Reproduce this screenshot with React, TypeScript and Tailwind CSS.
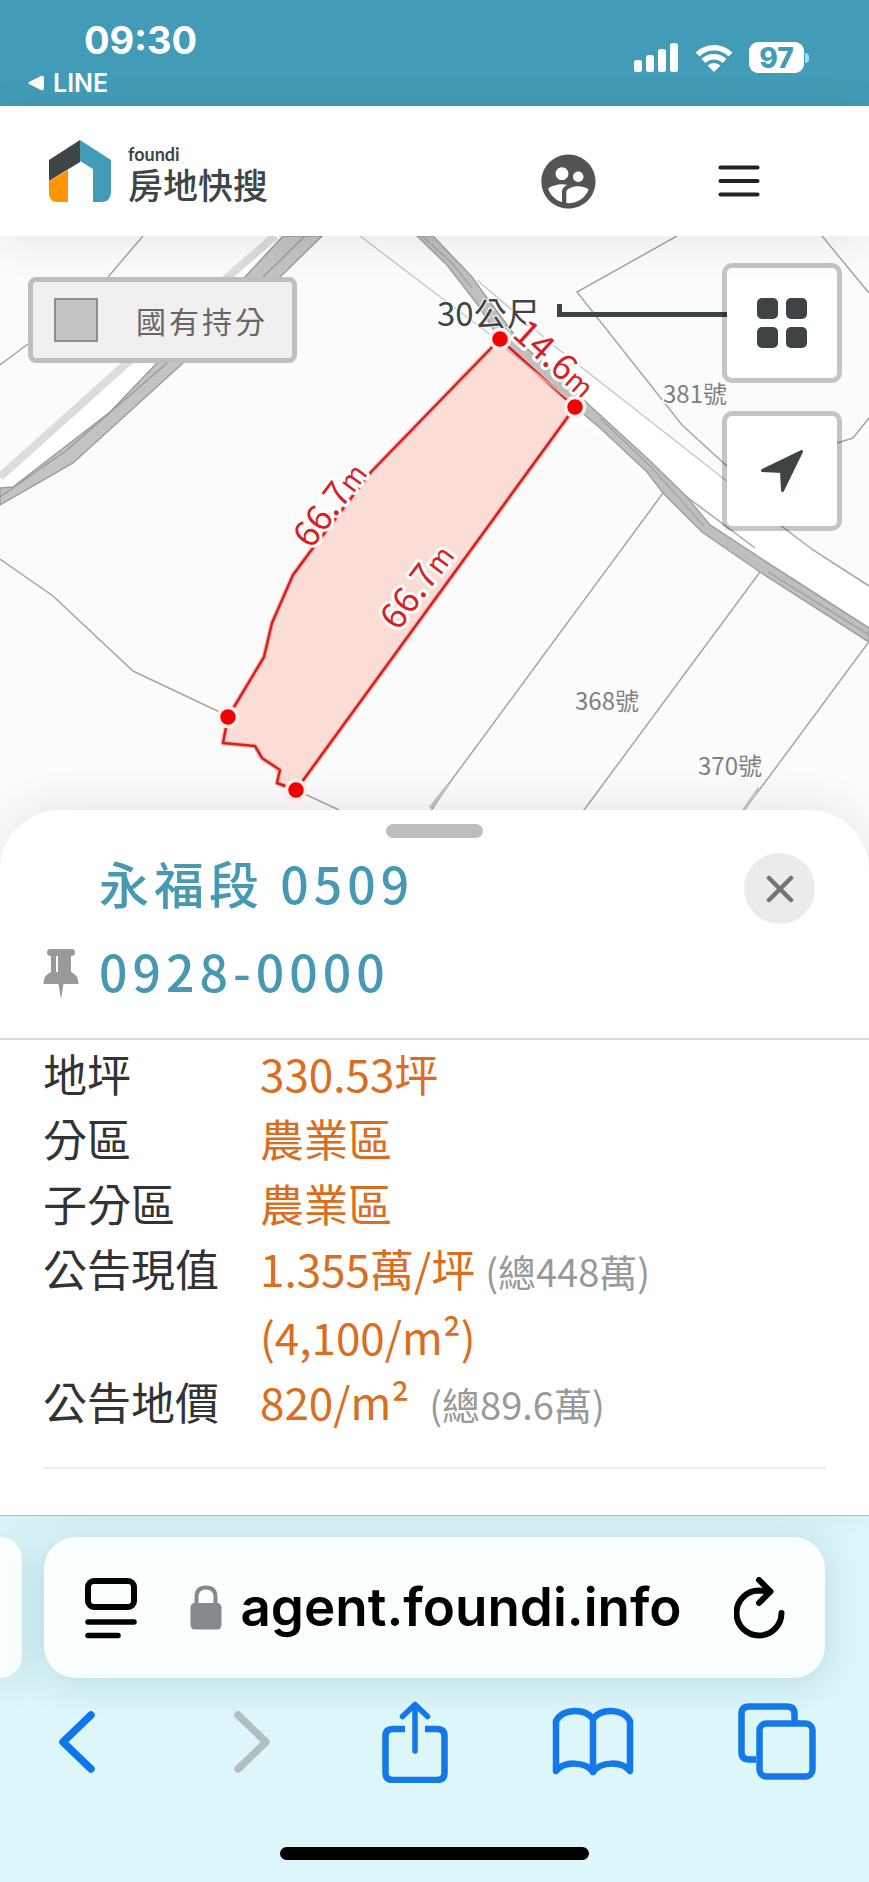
import { MdSupervisedUserCircle } from "react-icons/md";

const parcelPath =
  "M500 339 L371 472 L310 552 L293 575 L272 623 L264 657 L228 717 L223 743 L255 746 L262 758 L280 770 L277 783 L296 790 L575 407 Z";

const vertices = [
  [500, 339],
  [575, 407],
  [228, 717],
  [296, 790],
];

const edgeLabels = [
  { value: "66.7", x: 311, y: 550, angle: -53 },
  { value: "66.7", x: 398, y: 632, angle: -53 },
  { value: "14.6", x: 511, y: 336, angle: 42 },
];

const houseNumbers = [
  { text: "381號", x: 663, y: 403 },
  { text: "368號", x: 575, y: 710 },
  { text: "370號", x: 698, y: 775 },
];

function StatusBar() {
  return (
    <div className="flex h-[106px] items-start justify-between bg-[#439cb7] pr-[60px] pl-7 font-['Inter',sans-serif] text-white">
      <div className="pt-5">
        <div className="pl-[56px] text-[38px] leading-10 font-bold">09:30</div>
        <a href="#line" className="mt-[11px] flex items-center gap-[9px] text-[25px] leading-6 font-semibold">
          <svg width="16" height="16" viewBox="0 0 16 16" fill="currentColor" aria-hidden="true">
            <path d="M1 7 Q0 8 1 9 L13 15 Q16 16 16 13 V3 Q16 0 13 1 Z" />
          </svg>
          LINE
        </a>
      </div>
      <div className="mt-[42px] flex items-center gap-4">
        <svg width="45" height="30" viewBox="0 0 45 30" fill="currentColor" role="img" aria-label="訊號">
          <rect x="0" y="17" width="8" height="12" rx="2.5" />
          <rect x="12" y="12" width="8" height="17" rx="2.5" />
          <rect x="24" y="6" width="8" height="23" rx="2.5" />
          <rect x="36" y="0" width="8" height="29" rx="2.5" />
        </svg>
        <svg width="38" height="30" viewBox="0 0 38 30" fill="none" stroke="currentColor" role="img" aria-label="Wi-Fi">
          <path d="M2.500 11.500 A23.500 23.500 0 0 1 35.500 11.500" strokeWidth="5.500" />
          <path d="M8.500 18 A15 15 0 0 1 29.500 18" strokeWidth="5.500" />
          <path d="M19 29 L12.500 22.500 A9.500 9.500 0 0 1 25.500 22.500 Z" fill="currentColor" stroke="none" />
        </svg>
        <div className="flex items-center gap-px">
          <div className="flex h-[31px] w-[55px] items-center justify-center rounded-[9px] bg-white text-[28px] leading-none font-extrabold text-[#439cb7]">
            97
          </div>
          <div className="h-[10px] w-1 rounded-r-full bg-[#9be0ee]" />
        </div>
      </div>
    </div>
  );
}

function SiteHeader() {
  return (
    <header className="relative z-10 flex h-[130px] items-center justify-between bg-white pr-[109px] pl-12 shadow-[0_6px_40px_rgba(0,0,0,0.08)]">
      <a href="#home" className="flex items-center gap-4">
        <svg width="64" height="63" viewBox="0 0 64 63" aria-hidden="true">
          <path d="M1 20 L32 0 V22 L1 41 Z" fill="#3e4547" />
          <path d="M1 41 L20 30 V62 H9 Q1 62 1 53 Z" fill="#ff9405" />
          <path d="M32 0 L63 20 V52 Q63 62 53 62 H45 V29 L32 21 Z" fill="#439cb7" />
        </svg>
        <span className="flex flex-col pt-[6px] text-[#3e4547]">
          <span className="font-['Lato',sans-serif] text-lg leading-5 font-bold">foundi</span>
          <span className="text-[35px] leading-10 font-medium">房地快搜</span>
        </span>
      </a>
      <div className="mt-5 flex items-center gap-[117px]">
        <button type="button" aria-label="會員">
          <MdSupervisedUserCircle size={65} color="#545454" />
        </button>
        <button type="button" aria-label="選單">
          <svg width="42" height="34" viewBox="0 0 42 34" stroke="#242424" strokeWidth="4.200" strokeLinecap="round">
            <path d="M2.500 3.500 H39.500 M2.500 17 H39.500 M2.500 30.500 H39.500" />
          </svg>
        </button>
      </div>
    </header>
  );
}

function ParcelMap() {
  return (
    <svg
      viewBox="0 236 869 638"
      preserveAspectRatio="xMidYMid slice"
      className="block h-[638px] w-full bg-[#fbfbfb]"
      role="img"
      aria-label="地籍圖"
    >
      <path d="M283 236 L245 277 L157 363 L110 412 L13 487 L0 488 V477 L127 363 L228 277 L275 236 Z" fill="#fff" />
      <path d="M433 236 L477 280 L553 345 L728 482 L780 525 L813 550 L869 586 V642 L702 532 L500 340 Z" fill="#fff" />
      <path d="M275 236 L228 277 L127 363 L0 477" fill="none" stroke="#dcdcdc" strokeWidth="8" />
      <path
        d="M283 236 L245 277 L157 363 L110 412 L13 487 L0 488 V505 L73 463 L183 363 L280 277 L322 236 Z"
        fill="#c3c3c3"
        stroke="#9c9c9c"
        strokeWidth="1.5"
      />
      <path d="M305 236 L263 277 L167 363 L67 450 L0 497" fill="none" stroke="#9c9c9c" strokeWidth="1.5" />
      <path
        d="M417 236 L447 265 L478 305 L500 340 L575 407 L600 428 L647 472 L663 493 L702 532 L728 550 L760 572 L869 642 V628 L768 563 L710 525 L687 497 L647 458 L587 403 L520 342 L487 298 L472 277 L433 236 Z"
        fill="#bfbfbf"
        stroke="#a0a0a0"
        strokeWidth="1.5"
      />
      <g fill="none" stroke="#a6a6a6" strokeWidth="1.500">
        <path d="M143 236 L108 277 M28 344 L0 365" />
        <path d="M422 236 L452 263 L472 288 M600 418 L652 468 L704 526" />
        <path d="M768 572 L869 635" />
        <path d="M677 236 L577 292 L682 425 L728 467 L780 525 L813 550 L869 586" />
        <path d="M822 236 L869 293 M869 418 L853 438 L837 443" />
        <path d="M687 497 L755 548" />
        <path d="M663 493 L448 785 L425 820" />
        <path d="M760 572 L584 810 L560 842" />
        <path d="M868 643 L763 785 L742 812" />
        <path d="M448 785 L430 808 M759 788 L744 810" strokeWidth="3" stroke="#c4c4c4" />
        <path d="M0 559 L53 596 L133 671 L228 716 M296 790 L339 810" />
      </g>
      <path d="M360 236 L435 293 L500 342 M477 280 L553 345 L728 482" fill="none" stroke="#c8c8c8" strokeWidth="1.500" />
      <path d={parcelPath} fill="#f9ddd6" stroke="#fbb9b0" strokeWidth="5" strokeLinejoin="round" />
      <path d={parcelPath} fill="none" stroke="#d02222" strokeWidth="2.500" strokeLinejoin="round" />
      <path d="M504 347 L567 398" stroke="#cfb4ae" strokeWidth="1.500" />
      <g fill="#808080" fontSize="24" stroke="#fbfbfb" strokeWidth="3" paintOrder="stroke">
        {houseNumbers.map((n) => (
          <text key={n.text} x={n.x} y={n.y}>
            {n.text}
          </text>
        ))}
      </g>
      <text x="437" y="326" fontSize="33" fill="#3e4547" stroke="#fff" strokeWidth="2" paintOrder="stroke">
        30公尺
      </text>
      <path d="M559.500 304 V314.500 H740" fill="none" stroke="#3e4547" strokeWidth="5" />
      <g fill="#d81f26" stroke="#fff" strokeWidth="6" strokeLinejoin="round" paintOrder="stroke">
        {edgeLabels.map((l) => (
          <text key={l.x} transform={`translate(${l.x} ${l.y}) rotate(${l.angle})`} fontSize="36">
            {l.value}
            <tspan fontSize="28">m</tspan>
          </text>
        ))}
      </g>
      {vertices.map(([cx, cy]) => (
        <circle key={cx} cx={cx} cy={cy} r="9.500" fill="#f50000" stroke="#fff0ed" strokeWidth="3.500" />
      ))}
    </svg>
  );
}

function MapArea() {
  return (
    <section className="relative">
      <ParcelMap />
      <div className="absolute top-[41px] left-7 flex h-[86px] items-center gap-[38px] rounded-lg border-[5px] border-[#bebebe] bg-[#f0f0f0] pr-6 pl-[21px]">
        <span className="size-11 border-2 border-[#8c8c8c] bg-[#c3c3c3]" />
        <span className="text-[30px] tracking-widest text-[#666]">國有持分</span>
      </div>
      <div className="absolute top-[27px] right-[27px] flex flex-col gap-7">
        <button
          type="button"
          aria-label="圖層"
          className="flex size-[120px] items-center justify-center rounded-[10px] border-[5px] border-black/22 bg-white bg-clip-padding"
        >
          <svg width="50" height="50" viewBox="0 0 50 50" fill="#3e4345">
            <rect x="0" y="0" width="21" height="21" rx="5" />
            <rect x="29" y="0" width="21" height="21" rx="5" />
            <rect x="0" y="29" width="21" height="21" rx="5" />
            <rect x="29" y="29" width="21" height="21" rx="5" />
          </svg>
        </button>
        <button
          type="button"
          aria-label="定位"
          className="flex size-[120px] items-center justify-center rounded-[10px] border-[5px] border-black/22 bg-white bg-clip-padding"
        >
          <svg width="44" height="44" viewBox="0 0 44 44" fill="#3e4345" stroke="#3e4345" strokeWidth="3" strokeLinejoin="round">
            <path d="M41.500 2.500 L2.500 21.500 L21.500 22.500 L22.500 41.500 Z" />
          </svg>
        </button>
      </div>
    </section>
  );
}

const rows = [
  { label: "地坪", value: "330.53坪" },
  { label: "分區", value: "農業區" },
  { label: "子分區", value: "農業區" },
  { label: "公告現值", value: "1.355萬/坪", total: "(總448萬)", extra: "(4,100/m²)" },
  { label: "公告地價", value: "820/m²\u00a0", total: "(總89.6萬)" },
];

function DetailSheet() {
  return (
    <section className="relative z-10 -mt-16 rounded-t-[60px] bg-white pt-[14px] shadow-[0_-6px_40px_rgba(0,0,0,0.08)]">
      <div className="mx-auto h-[14px] w-[97px] rounded-full bg-[#bebebe]" />
      <div className="flex items-start justify-between border-b-2 border-[#dcdcdc] pr-[54px] pb-6 pl-[43px]">
        <div className="flex items-end gap-5">
          <svg width="36" height="50" viewBox="0 0 36 50" fill="#999" className="mb-[15px]" aria-hidden="true">
            <path d="M7 0 H29 Q32 0 32 3.500 Q32 7 28 7 V23 Q35.500 26 35.500 35 H20.500 L18 50 L15.500 35 H0.500 Q0.500 26 8 23 V7 Q4 7 4 3.500 Q4 0 7 0 Z" />
            <path d="M14 7 V23" stroke="#fff" strokeWidth="2" />
          </svg>
          <h1 className="text-[50px] leading-[88px] font-medium tracking-widest text-[#4799b1]">
            永福段 0509
            <br />
            0928-0000
          </h1>
        </div>
        <button
          type="button"
          aria-label="關閉"
          className="mt-[15px] flex size-[71px] items-center justify-center rounded-full bg-[#ebebeb]"
        >
          <svg width="28" height="28" viewBox="0 0 28 28" stroke="#757575" strokeWidth="4.500" strokeLinecap="round">
            <path d="M3 3 L25 25 M25 3 L3 25" />
          </svg>
        </button>
      </div>
      <div className="px-[43px] pb-[46px]">
        <dl className="border-b-2 border-[#ededed] pt-px pb-[33px] text-[44px] leading-[65px]">
          {rows.map((row) => (
            <div key={row.label} className="flex">
              <dt className="w-[217px] text-[#333]">{row.label}</dt>
              <dd className="text-[#db6d20]">
                {row.value}
                {row.total && <span className="ml-[10px] text-[38px] leading-none text-[#999]">{row.total}</span>}
                {row.extra && <div className="mt-[3px]">{row.extra}</div>}
              </dd>
            </div>
          ))}
        </dl>
      </div>
    </section>
  );
}

function BrowserBar() {
  return (
    <footer className="overflow-hidden border-t border-[#a9c5ca] bg-[#dcf6fa] pt-[21px] pb-[22px]">
      <div className="flex gap-[22px] pr-11">
        <div className="w-[22px] rounded-r-[32px] bg-[#fbfeff] shadow-[0_4px_36px_rgba(60,120,130,0.22)]" />
        <div className="flex h-[141px] flex-1 items-center justify-between rounded-[32px] bg-[#fbfeff] px-10 shadow-[0_4px_36px_rgba(60,120,130,0.22)]">
          <button type="button" aria-label="頁面選單">
            <svg width="54" height="62" viewBox="0 0 54 62" fill="none" stroke="#000" strokeLinecap="round">
              <rect x="4" y="4" width="46" height="26" rx="6" strokeWidth="6" />
              <path d="M4 45 H50 M4 58.500 H34" strokeWidth="5.500" />
            </svg>
          </button>
          <button type="button" className="flex items-center gap-[18px] font-['Inter',sans-serif] text-[53px] leading-none font-semibold text-black">
            <svg width="32" height="45" viewBox="0 0 32 45" aria-hidden="true">
              <path d="M6.500 22 V12 Q6.500 2.500 16 2.500 Q25.500 2.500 25.500 12 V22" fill="none" stroke="#85898c" strokeWidth="4" />
              <rect x="0.500" y="18" width="31" height="26.500" rx="4.500" fill="#85898c" />
            </svg>
            agent.foundi.info
          </button>
          <button type="button" aria-label="重新載入">
            <svg width="51" height="62" viewBox="0 0 51 62" fill="none" stroke="#000" strokeWidth="6" strokeLinecap="round" strokeLinejoin="round">
              <path d="M47.500 36 A22.500 22.500 0 1 1 25 13.500 L36 14.500" />
              <path d="M25 3 L36.500 14.500 L25 26" />
            </svg>
          </button>
        </div>
      </div>
      <nav className="mt-[22px] flex h-[84px] items-center justify-between pr-[53px] pl-[59px]">
        <button type="button" aria-label="上一頁" className="w-[70px]">
          <svg width="37" height="64" viewBox="0 0 37 64" fill="none" stroke="#0b76ee" strokeWidth="7.500" strokeLinecap="round" strokeLinejoin="round">
            <path d="M32 5 L4 32 L32 59" />
          </svg>
        </button>
        <button type="button" aria-label="下一頁" className="w-[44px]">
          <svg width="37" height="64" viewBox="0 0 37 64" fill="none" stroke="#b0bfc2" strokeWidth="7.500" strokeLinecap="round" strokeLinejoin="round">
            <path d="M5 5 L33 32 L5 59" />
          </svg>
        </button>
        <button type="button" aria-label="分享">
          <svg width="66" height="82" viewBox="0 0 66 82" fill="none" stroke="#1478e8" strokeWidth="6.500" strokeLinejoin="round">
            <path d="M23 28 H11 Q3.500 28 3.500 35 V72 Q3.500 79 11 79 H55 Q62.500 79 62.500 72 V35 Q62.500 28 55 28 H43" />
            <path d="M33 50 V4 M20.500 15.500 L33 3.500 L45.500 15.500" strokeWidth="5.500" strokeLinecap="round" />
          </svg>
        </button>
        <button type="button" aria-label="書籤">
          <svg width="82" height="70" viewBox="0 0 82 70" fill="none" stroke="#1478e8" strokeWidth="6.500" strokeLinejoin="round" strokeLinecap="round">
            <path d="M41 12 C33 1 11 1 4 14 V64 C12 54 33 54 41 65 C49 54 70 54 78 64 V14 C71 1 49 1 41 12 V65" />
          </svg>
        </button>
        <button type="button" aria-label="分頁">
          <svg width="78" height="78" viewBox="0 0 78 78" fill="none" stroke="#1478e8" strokeWidth="6.500">
            <path d="M18 56.500 H11 Q3.500 56.500 3.500 49 V11 Q3.500 3.500 11 3.500 H49 Q56.500 3.500 56.500 11 V18" />
            <rect x="21.500" y="20.500" width="53" height="53" rx="7" />
          </svg>
        </button>
      </nav>
      <div className="mx-auto mt-[63px] h-[13px] w-[309px] rounded-full bg-black" />
    </footer>
  );
}

export default function App() {
  return (
    <main className="min-h-screen bg-[#dcf6fa] font-['Noto_Sans_CJK_TC',sans-serif]">
      <StatusBar />
      <SiteHeader />
      <MapArea />
      <DetailSheet />
      <BrowserBar />
    </main>
  );
}
